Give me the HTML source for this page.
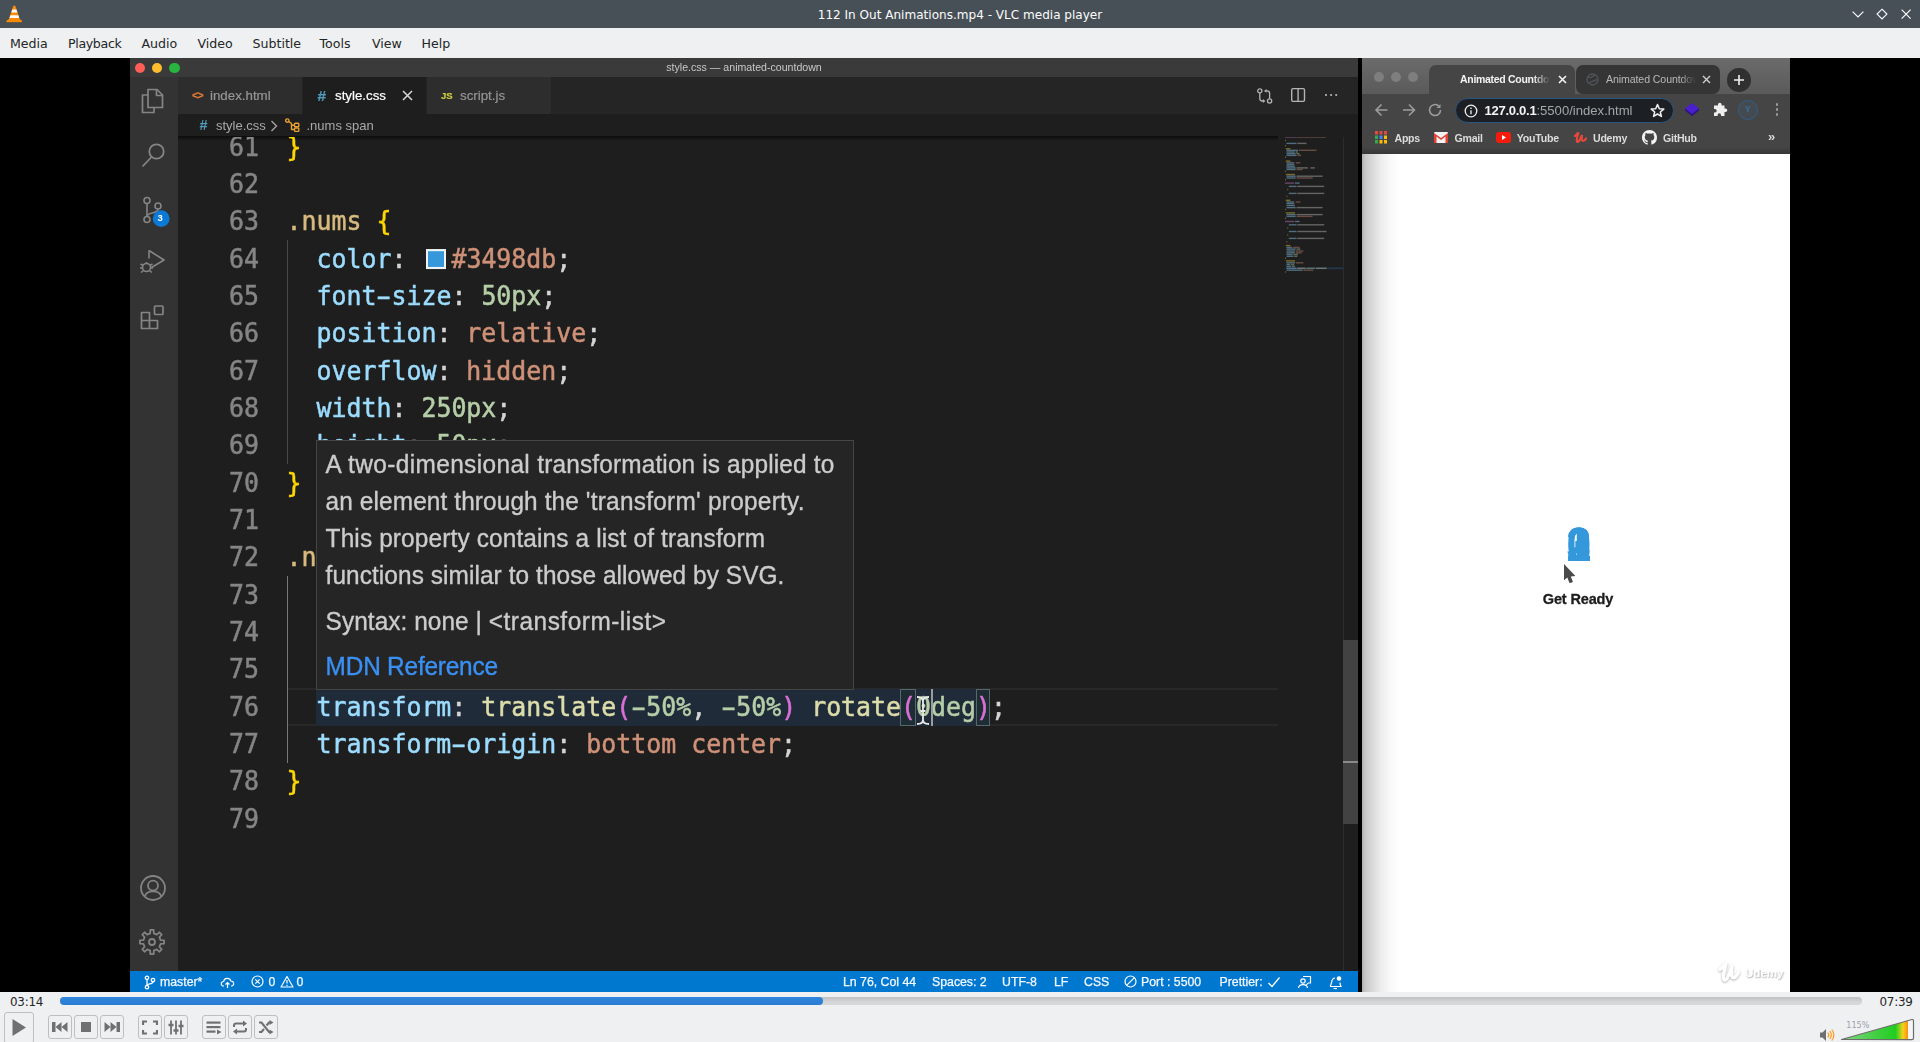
<!DOCTYPE html>
<html lang="en">
<head>
<meta charset="utf-8">
<title>112 In Out Animations.mp4 - VLC media player</title>
<style>
*{box-sizing:border-box;margin:0;padding:0}
html,body{width:1920px;height:1042px;overflow:hidden;background:#eff0f1}
body{font-family:"DejaVu Sans","Liberation Sans",sans-serif;position:relative}
.abs{position:absolute}
#root{position:absolute;left:0;top:0;width:1920px;height:1042px;overflow:hidden;background:#eff0f1}
/* ---------- VLC chrome ---------- */
#titlebar{left:0;top:0;width:1920px;height:28px;background:#475057;color:#fcfcfc}
#title{left:0;top:0;width:1920px;height:28px;line-height:31px;text-align:center;font-size:12.05px;letter-spacing:0px}
#menubar{left:0;top:28px;width:1920px;height:30px;background:#eff0f1;color:#232627;font-size:12.6px}
#menubar span{position:absolute;top:0;line-height:32px;white-space:nowrap}
#video{left:0;top:58px;width:1920px;height:934px;background:#000;overflow:hidden}
#controls{left:0;top:992px;width:1920px;height:50px;background:#eff0f1}
.tm{font-size:11.9px;color:#232627;line-height:16px;white-space:nowrap;letter-spacing:-.25px}
.btn{position:absolute;border:1px solid #bdbfc0;border-radius:3px;background:#eff0f1}
/* ---------- VS Code ---------- */
#vsc{left:130px;top:0;width:1228px;height:934px;background:#1e1e1e;overflow:hidden;filter:blur(.6px);font-family:"Liberation Sans",sans-serif}
#vtitle{left:0;top:0;width:1228px;height:19px;background:#3a3a3a}
#vact{left:0;top:19px;width:48px;height:895px;background:#333333}
#vtabs{left:48px;top:19px;width:1180px;height:36.5px;background:#252526}
.tab{position:absolute;top:0;height:36.5px;-webkit-text-stroke:.2px;background:#2d2d2d;color:#969696;font-size:13.3px;line-height:37px;white-space:nowrap}
#vcrumb{left:48px;top:55.5px;width:1180px;height:22.5px;background:#1e1e1e;color:#a9a9a9;font-size:13px;line-height:23px}
#vstatus{left:0;top:913px;width:1228px;height:21px;background:#0078d0;color:#f4f8ff;font-size:12.3px;line-height:23.4px;-webkit-text-stroke:.25px}
#vstatus span{position:absolute;top:0;white-space:nowrap}
.ln{position:absolute;width:40px;text-align:right;color:#858585;font-family:"DejaVu Sans Mono","Liberation Mono",monospace;font-size:24.9px;line-height:37.33px;height:37.33px;-webkit-text-stroke:.5px;transform:scaleY(1.05);transform-origin:0 27.2px;margin-top:.2px;white-space:pre}
.cl{position:absolute;color:#d4d4d4;font-family:"DejaVu Sans Mono","Liberation Mono",monospace;font-size:24.9px;line-height:37.33px;height:37.33px;-webkit-text-stroke:.5px;transform:scaleY(1.05);transform-origin:0 27.2px;margin-top:.2px;white-space:pre}
.sw{display:inline-block;width:20px;height:18.8px;background:#3498db;border:2.7px solid #f2f2f2;margin:0 5.5px 0 4.5px;vertical-align:-.6px}
.hy{display:inline-block;transform:scaleX(1.75)}
.sel{color:#d7ba7d}.br{color:#ffd700}.pr{color:#9cdcfe}.st{color:#ce9178}.nu{color:#b5cea8}.fn{color:#dcdcaa}.pa{color:#da70d6}
#tip{left:186px;top:382px;width:538px;height:250px;background:#252526;border:1px solid #454545;color:#cccccc;font-family:"Liberation Sans",sans-serif;font-size:24.4px;white-space:nowrap;-webkit-text-stroke:.35px}
#tip div{position:absolute;left:8.6px;line-height:30px;height:30px;transform:scaleY(1.045);transform-origin:0 50%}
/* ---------- Browser ---------- */
.nums span{position:absolute;left:0;top:0;width:60px;height:44px;line-height:44px;text-align:center;font-size:42px;font-weight:bold;color:#3498db;transform:scale(1.06,1.16);transform-origin:50% 48%;-webkit-text-stroke:.1px #3498db}
#brw{left:1362px;top:0;width:428px;height:934px;background:#fff;overflow:hidden;filter:blur(.6px);font-family:"Liberation Sans",sans-serif}
</style>
</head>
<body>
<div id="root">

<!-- VLC title bar -->
<div id="titlebar" class="abs">
  <svg class="abs" style="left:6px;top:5px" width="17" height="18" viewBox="0 0 17 18">
    <path d="M8.3 0.4 Q9.3 0.4 9.6 1.4 L13.6 13.8 L15.8 16 L15.8 17 L0.6 17 L0.6 16 L3 13.8 L7 1.4 Q7.3 0.4 8.3 0.4 Z" fill="#f78b08"/>
    <path d="M6.3 4.6 L10.4 4.6 L11.4 7.6 L5.3 7.6 Z" fill="#fbfbfb"/>
    <path d="M4.4 10.2 L12.3 10.2 L13.2 13 L3.5 13 Z" fill="#fbfbfb"/>
    <path d="M0.6 15.4 L15.800 15.4 L15.800 17.200 L0.6 17.2 Z" fill="#f48a06"/>
  </svg>
  <div id="title" class="abs">112 In Out Animations.mp4 - VLC media player</div>
  <svg class="abs" style="left:1850px;top:7px" width="64" height="14" viewBox="0 0 64 14" fill="none" stroke="#fcfcfc" stroke-width="1.15">
    <path d="M2.600 4.600 L8 10 L13.400 4.600"/>
    <path d="M32 2.200 L36.900 7.100 L32 12 L27.100 7.100 Z"/>
    <path d="M51.600 2.600 L60.600 11.600 M60.600 2.600 L51.600 11.600"/>
  </svg>
</div>

<!-- VLC menu bar -->
<div id="menubar" class="abs">
  <span style="left:10px">Media</span>
  <span style="left:68px;letter-spacing:-.35px">Playback</span>
  <span style="left:141.5px">Audio</span>
  <span style="left:197.5px">Video</span>
  <span style="left:252.5px">Subtitle</span>
  <span style="left:319.5px">Tools</span>
  <span style="left:372px">View</span>
  <span style="left:421.5px">Help</span>
</div>

<!-- Video surface -->
<div id="video" class="abs">
<div id="vsc" class="abs">
  <!-- mac title bar -->
  <div id="vtitle" class="abs">
    <div class="abs" style="left:4.5px;top:4.5px;width:10.5px;height:10.5px;border-radius:50%;background:#fd5f57"></div>
    <div class="abs" style="left:21.5px;top:4.5px;width:10.5px;height:10.5px;border-radius:50%;background:#febc2e"></div>
    <div class="abs" style="left:39px;top:4.5px;width:10.5px;height:10.5px;border-radius:50%;background:#27b43f"></div>
    <div class="abs" style="left:0;top:0;width:1228px;height:19px;line-height:19px;text-align:center;color:#c8c8c8;font-size:10.6px;padding-left:0px">style.css — animated-countdown</div>
  </div>

  <!-- activity bar -->
  <div id="vact" class="abs">
    <!-- files -->
    <svg class="abs" style="left:8px;top:9px" width="30" height="30" viewBox="0 0 30 30" fill="none" stroke="#858585" stroke-width="1.7" stroke-linejoin="round">
      <path d="M10 3.5 H19 L24.5 9 V21.5 H10 Z"/><path d="M18.5 3.5 V9.5 H24.5"/><path d="M10 9 H4.5 V26.5 H16 V21.5"/>
    </svg>
    <!-- search -->
    <svg class="abs" style="left:9px;top:63px" width="30" height="30" viewBox="0 0 30 30" fill="none" stroke="#858585" stroke-width="1.8">
      <circle cx="17.5" cy="11.5" r="7.2"/><path d="M12.5 17 L3.5 26.5"/>
    </svg>
    <!-- scm -->
    <svg class="abs" style="left:9px;top:117.500px" width="32" height="34" viewBox="0 0 32 34" fill="none" stroke="#858585" stroke-width="1.6">
      <circle cx="8" cy="5.5" r="3"/><circle cx="8" cy="24.5" r="3"/><circle cx="19" cy="11" r="3"/><path d="M8 8.5 V21.5"/><path d="M19 14 C19 19 8 17 8 21.5"/>
      <circle cx="22.2" cy="23.6" r="8.4" fill="#0a7ad6" stroke="none"/>
    </svg>
    <div class="abs" style="left:24.2px;top:134.6px;width:12px;height:12px;line-height:12px;text-align:center;color:#fff;font-size:9.5px;font-weight:bold">3</div>
    <!-- debug -->
    <svg class="abs" style="left:8px;top:169px" width="32" height="32" viewBox="0 0 32 32" fill="none" stroke="#858585" stroke-width="1.6" stroke-linejoin="round">
      <path d="M11 4.5 L26 14 L13.5 21.5"/><path d="M11 4.500 V12.500"/>
      <circle cx="8.500" cy="21.500" r="4"/><path d="M2.500 18 L5 19.500 M14.500 18 L12 19.500 M2 22 H4.500 M12.500 22 H15 M3 26.500 L5.500 24.500 M14 26.500 L11.500 24.500 M8.500 17.500 V16"/>
    </svg>
    <!-- extensions -->
    <svg class="abs" style="left:9px;top:226px" width="30" height="30" viewBox="0 0 30 30" fill="none" stroke="#858585" stroke-width="1.7" stroke-linejoin="round">
      <path d="M2.500 9.500 H10.500 V17.500 H2.500 Z M2.500 17.500 H10.500 V25.500 H2.500 Z M10.500 17.500 H18.500 V25.500 H10.500 Z"/><rect x="15.500" y="3" width="8.500" height="8.500" rx="1"/>
    </svg>
    <!-- account -->
    <svg class="abs" style="left:7.500px;top:795.600px" width="30" height="30" viewBox="0 0 30 30" fill="none" stroke="#838383" stroke-width="1.800">
      <circle cx="15" cy="15" r="12"/><circle cx="15" cy="12.600" r="5"/><path d="M6.800 23.400 C8.500 16.800 21.500 16.800 23.200 23.400"/>
    </svg>
    <!-- gear -->
    <svg class="abs" style="left:7.200px;top:849.500px" width="30" height="30" viewBox="0 0 30 30" fill="none" stroke="#838383" stroke-width="1.800" stroke-linejoin="round">
      <path d="M13.15 6.40 L13.38 2.91 L16.62 2.91 L16.85 6.40 L19.77 7.61 L22.40 5.30 L24.70 7.60 L22.39 10.23 L23.60 13.15 L27.09 13.38 L27.09 16.62 L23.60 16.85 L22.39 19.77 L24.70 22.40 L22.40 24.70 L19.77 22.39 L16.85 23.60 L16.62 27.09 L13.38 27.09 L13.15 23.60 L10.23 22.39 L7.60 24.70 L5.30 22.40 L7.61 19.77 L6.40 16.85 L2.91 16.62 L2.91 13.38 L6.40 13.15 L7.61 10.23 L5.30 7.60 L7.60 5.30 L10.23 7.61 Z"/><circle cx="15" cy="15" r="3"/>
    </svg>
  </div>

  <!-- tabs -->
  <div id="vtabs" class="abs">
    <div class="tab" style="left:0;width:124px"><span style="position:absolute;left:14px;color:#e37933;font-size:10.5px;font-weight:bold;letter-spacing:-.6px">&lt;&gt;</span><span style="position:absolute;left:32px">index.html</span></div>
    <div class="tab" style="left:125px;width:123px;background:#1e1e1e;color:#ffffff"><span style="position:absolute;left:14.5px;color:#519aba;font-size:15.5px;font-weight:bold">#</span><span style="position:absolute;left:32px">style.css</span>
      <svg style="position:absolute;left:99px;top:13px" width="11" height="11" viewBox="0 0 11 11" stroke="#d8d8d8" stroke-width="1.500"><path d="M1 1 L10 10 M10 1 L1 10"/></svg></div>
    <div class="tab" style="left:249px;width:124px"><span style="position:absolute;left:14px;color:#cbcb41;font-size:9.500px;font-weight:bold">JS</span><span style="position:absolute;left:33px">script.js</span></div>
    <!-- editor actions -->
    <svg class="abs" style="left:1077px;top:9px" width="20" height="20" viewBox="0 0 20 20" fill="none" stroke="#b4b4b4" stroke-width="1.300">
      <circle cx="4.800" cy="4.900" r="2.100"/><circle cx="14.600" cy="15" r="2.100"/>
      <path d="M4.800 7.100 V12.500 Q4.800 15 7.300 15 H8.500"/><path d="M7.900 13.100 L10.400 15 L7.900 16.900 Z" fill="#b4b4b4" stroke="none"/>
      <path d="M14.600 12.800 V7.400 Q14.600 4.900 12.100 4.900 H10.900"/><path d="M11.500 3 L9 4.900 L11.500 6.800 Z" fill="#b4b4b4" stroke="none"/>
    </svg>
    <svg class="abs" style="left:1111px;top:9px" width="18" height="18" viewBox="0 0 18 18" fill="none" stroke="#b4b4b4" stroke-width="1.400"><rect x="2.700" y="2.600" width="12.800" height="12.800" rx="1.300"/><path d="M9.100 2.600 V15.400"/></svg>
    <div class="abs" style="left:1146.700px;top:17.200px;width:2.300px;height:2.300px;background:#b0b0b0;border-radius:30%;box-shadow:5.100px 0 0 #b0b0b0,10.200px 0 0 #b0b0b0"></div>
  </div>

  <!-- breadcrumbs -->
  <div id="vcrumb" class="abs">
    <span class="abs" style="left:21.5px;color:#519aba;font-weight:bold;font-size:14.5px">#</span>
    <span class="abs" style="left:38px">style.css</span>
    <svg class="abs" style="left:92px;top:6px" width="8" height="12" viewBox="0 0 8 12" fill="none" stroke="#a9a9a9" stroke-width="1.300"><path d="M1.500 1 L6.500 6 L1.500 11"/></svg>
    <svg class="abs" style="left:105.500px;top:3px" width="18" height="18" viewBox="0 0 18 18" fill="none" stroke="#e8a030" stroke-width="1.400" stroke-linejoin="round"><circle cx="3.300" cy="3.600" r="1.700"/><path d="M4.800 4.600 L7.500 6.500 V12.500 H10.500 M7.500 8.200 H10.500"/><rect x="10.500" y="6.300" width="4.300" height="3.400" rx=".8"/><rect x="10.500" y="11" width="4.300" height="3.400" rx=".8"/></svg>
    <span class="abs" style="left:128.5px">.nums span</span>
  </div>
  <!-- scroll shadow below breadcrumbs -->
  <div class="abs" style="left:48px;top:78px;width:1100px;height:5px;background:linear-gradient(#0c0c0c,rgba(16,16,16,0))"></div>

<!--ED_START-->
  <!-- editor -->
  <div id="ed" class="abs" style="left:48px;top:79px;width:1180px;height:835px;overflow:hidden">
    <div class="abs" style="left:109px;top:551.40px;width:991px;height:37.33px;border-top:2px solid #282828;border-bottom:2px solid #282828"></div>
    <div class="abs" style="left:138px;top:552.40px;width:674px;height:36.33px;background:#1f2b38"></div>
    <div class="abs" style="left:722.3px;top:551.90px;width:15.7px;height:37.33px;border:1px solid #56676f;background:#1e2d33"></div>
    <div class="abs" style="left:798.3px;top:551.90px;width:14px;height:37.33px;border:1px solid #56676f;background:#1e2d33"></div>
    <div class="abs" style="left:109px;top:103.44px;width:1.2px;height:223.98px;background:#484848"></div>
    <div class="abs" style="left:109px;top:439.41px;width:1.4px;height:186.65px;background:#787878"></div>
    <div class="ln" style="left:41px;top:-8.55px">61</div>
    <div class="cl" style="left:108.5px;top:-8.55px"><span class="br">}</span></div>
    <div class="ln" style="left:41px;top:28.78px">62</div>
    <div class="ln" style="left:41px;top:66.11px">63</div>
    <div class="cl" style="left:108.5px;top:66.11px"><span class="sel">.nums</span> <span class="br">{</span></div>
    <div class="ln" style="left:41px;top:103.44px">64</div>
    <div class="cl" style="left:108.5px;top:103.44px">  <span class="pr">color</span>: <span class="sw"></span><span class="st">#3498db</span>;</div>
    <div class="ln" style="left:41px;top:140.77px">65</div>
    <div class="cl" style="left:108.5px;top:140.77px">  <span class="pr">font<span class="hy">-</span>size</span>: <span class="nu">50px</span>;</div>
    <div class="ln" style="left:41px;top:178.10px">66</div>
    <div class="cl" style="left:108.5px;top:178.10px">  <span class="pr">position</span>: <span class="st">relative</span>;</div>
    <div class="ln" style="left:41px;top:215.43px">67</div>
    <div class="cl" style="left:108.5px;top:215.43px">  <span class="pr">overflow</span>: <span class="st">hidden</span>;</div>
    <div class="ln" style="left:41px;top:252.76px">68</div>
    <div class="cl" style="left:108.5px;top:252.76px">  <span class="pr">width</span>: <span class="nu">250px</span>;</div>
    <div class="ln" style="left:41px;top:290.09px">69</div>
    <div class="cl" style="left:108.5px;top:290.09px">  <span class="pr">height</span>: <span class="nu">50px</span>;</div>
    <div class="ln" style="left:41px;top:327.42px">70</div>
    <div class="cl" style="left:108.5px;top:327.42px"><span class="br">}</span></div>
    <div class="ln" style="left:41px;top:364.75px">71</div>
    <div class="ln" style="left:41px;top:402.08px">72</div>
    <div class="cl" style="left:108.5px;top:402.08px"><span class="sel">.nums span</span> <span class="br">{</span></div>
    <div class="ln" style="left:41px;top:439.41px">73</div>
    <div class="cl" style="left:108.5px;top:439.41px">  <span class="pr">position</span>: <span class="st">absolute</span>;</div>
    <div class="ln" style="left:41px;top:476.74px">74</div>
    <div class="cl" style="left:108.5px;top:476.74px">  <span class="pr">top</span>: <span class="nu">50%</span>;</div>
    <div class="ln" style="left:41px;top:514.07px">75</div>
    <div class="cl" style="left:108.5px;top:514.07px">  <span class="pr">left</span>: <span class="nu">50%</span>;</div>
    <div class="ln" style="left:41px;top:551.40px">76</div>
    <div class="cl" style="left:108.5px;top:551.40px">  <span class="pr">transform</span>: <span class="fn">translate</span><span class="pa">(</span><span class="nu"><span class="hy">-</span>50%</span>, <span class="nu"><span class="hy">-</span>50%</span><span class="pa">)</span> <span class="fn">rotate</span><span class="pa">(</span><span class="nu">0deg</span><span class="pa">)</span>;</div>
    <div class="ln" style="left:41px;top:588.73px">77</div>
    <div class="cl" style="left:108.5px;top:588.73px">  <span class="pr">transform<span class="hy">-</span>origin</span>: <span class="st">bottom center</span>;</div>
    <div class="ln" style="left:41px;top:626.06px">78</div>
    <div class="cl" style="left:108.5px;top:626.06px"><span class="br">}</span></div>
    <div class="ln" style="left:41px;top:663.39px">79</div>
    <div class="abs" style="left:752.5px;top:552.40px;width:2px;height:36.33px;background:#9a9c9e"></div>
    <svg class="abs" style="left:738px;top:559.40px" width="14" height="29" viewBox="0 0 14 29" fill="none" stroke="#e8e8e8" stroke-width="1.8"><path d="M1 1 C4.500 1 7 2 7 5 V24 C7 27 4.500 28 1 28 M13 1 C9.500 1 7 2 7 5 M7 24 C7 27 9.500 28 13 28 M4.500 15 H9.500"/></svg>
    <!-- hover tooltip -->
    <div id="tip" class="abs" style="left:138px;top:303px">
      <div style="top:8.8px"><span style="letter-spacing:.39px">A two-dimensional </span><span style="letter-spacing:.15px">transformation is applied to</span></div>
      <div style="top:45.8px"><span style="letter-spacing:.11px">an element through the </span><span style="letter-spacing:.26px">'transform' property.</span></div>
      <div style="top:82.8px;letter-spacing:.14px">This property contains a list of transform</div>
      <div style="top:119.8px;letter-spacing:.08px">functions similar to those allowed by SVG.</div>
      <div style="top:166.3px"><span style="letter-spacing:.06px">Syntax: none | </span><span style="letter-spacing:.52px">&lt;transform-list&gt;</span></div>
      <div style="top:210.7px;color:#3a90f2;letter-spacing:-.2px">MDN Reference</div>
    </div>
    <svg class="abs" style="left:1102px;top:-7px;filter:blur(.5px)" width="66" height="150" viewBox="0 0 66 150">
      <rect x="5.8" y="137.4" width="57.6" height="1.8" fill="#24384d"/>
      <rect x="5.0" y="6.3" width="11.5" height="1.4" fill="#9a5f9a" opacity=".62"/>
      <rect x="16.5" y="6.3" width="29.2" height="1.4" fill="#94695a" opacity=".62"/>
      <rect x="5.1" y="9.7" width="0.9" height="1.4" fill="#b09a2e" opacity=".62"/>
      <rect x="6.5" y="12.7" width="10.0" height="1.4" fill="#6f9cb8" opacity=".62"/>
      <rect x="17.3" y="12.7" width="9.2" height="1.4" fill="#8f8f8f" opacity=".62"/>
      <rect x="5.0" y="15.0" width="0.9" height="1.4" fill="#b09a2e" opacity=".62"/>
      <rect x="5.8" y="18.1" width="4.6" height="1.4" fill="#b09a2e" opacity=".62"/>
      <rect x="6.5" y="19.6" width="11.5" height="1.4" fill="#6f9cb8" opacity=".62"/>
      <rect x="18.8" y="19.6" width="17.7" height="1.4" fill="#94695a" opacity=".62"/>
      <rect x="6.5" y="21.3" width="8.4" height="1.4" fill="#6f9cb8" opacity=".62"/>
      <rect x="15.7" y="21.3" width="2.3" height="1.4" fill="#86977c" opacity=".62"/>
      <rect x="6.5" y="23.0" width="9.2" height="1.4" fill="#6f9cb8" opacity=".62"/>
      <rect x="16.5" y="23.0" width="3.1" height="1.4" fill="#86977c" opacity=".62"/>
      <rect x="6.5" y="24.7" width="10.0" height="1.4" fill="#6f9cb8" opacity=".62"/>
      <rect x="17.3" y="24.7" width="3.8" height="1.4" fill="#94695a" opacity=".62"/>
      <rect x="5.0" y="26.4" width="0.9" height="1.4" fill="#b09a2e" opacity=".62"/>
      <rect x="5.8" y="30.4" width="4.6" height="1.4" fill="#b09a2e" opacity=".62"/>
      <rect x="6.5" y="32.1" width="7.7" height="1.4" fill="#6f9cb8" opacity=".62"/>
      <rect x="15.7" y="32.1" width="4.6" height="1.4" fill="#94695a" opacity=".62"/>
      <rect x="6.5" y="33.8" width="7.7" height="1.4" fill="#6f9cb8" opacity=".62"/>
      <rect x="6.5" y="35.5" width="8.4" height="1.4" fill="#6f9cb8" opacity=".62"/>
      <rect x="6.5" y="37.2" width="9.2" height="1.4" fill="#6f9cb8" opacity=".62"/>
      <rect x="16.5" y="37.2" width="11.5" height="1.4" fill="#8f8f8f" opacity=".62"/>
      <rect x="30.3" y="37.2" width="4.6" height="1.4" fill="#8f8f8f" opacity=".62"/>
      <rect x="6.5" y="38.8" width="9.2" height="1.4" fill="#6f9cb8" opacity=".62"/>
      <rect x="16.5" y="38.8" width="6.1" height="1.4" fill="#94695a" opacity=".62"/>
      <rect x="5.0" y="40.7" width="0.9" height="1.4" fill="#b09a2e" opacity=".62"/>
      <rect x="5.8" y="43.8" width="9.2" height="1.4" fill="#b09a2e" opacity=".62"/>
      <rect x="6.5" y="45.5" width="9.2" height="1.4" fill="#6f9cb8" opacity=".62"/>
      <rect x="16.5" y="45.5" width="26.1" height="1.4" fill="#8f8f8f" opacity=".62"/>
      <rect x="6.5" y="47.3" width="9.2" height="1.4" fill="#6f9cb8" opacity=".62"/>
      <rect x="16.5" y="47.3" width="16.1" height="1.4" fill="#94695a" opacity=".62"/>
      <rect x="5.0" y="49.1" width="0.9" height="1.4" fill="#b09a2e" opacity=".62"/>
      <rect x="5.0" y="52.4" width="9.2" height="1.4" fill="#9a5f9a" opacity=".62"/>
      <rect x="15.0" y="52.4" width="4.6" height="1.4" fill="#6f9cb8" opacity=".62"/>
      <rect x="8.8" y="55.7" width="7.7" height="1.4" fill="#6f9cb8" opacity=".62"/>
      <rect x="17.3" y="55.7" width="26.9" height="1.4" fill="#8f8f8f" opacity=".62"/>
      <rect x="7.3" y="58.8" width="0.9" height="1.4" fill="#b09a2e" opacity=".62"/>
      <rect x="8.8" y="62.7" width="7.7" height="1.4" fill="#6f9cb8" opacity=".62"/>
      <rect x="17.3" y="62.7" width="26.9" height="1.4" fill="#8f8f8f" opacity=".62"/>
      <rect x="6.5" y="65.7" width="0.9" height="1.4" fill="#b09a2e" opacity=".62"/>
      <rect x="5.8" y="69.6" width="4.6" height="1.4" fill="#b09a2e" opacity=".62"/>
      <rect x="6.5" y="71.3" width="7.7" height="1.4" fill="#6f9cb8" opacity=".62"/>
      <rect x="15.7" y="71.3" width="4.6" height="1.4" fill="#94695a" opacity=".62"/>
      <rect x="6.5" y="72.9" width="7.7" height="1.4" fill="#6f9cb8" opacity=".62"/>
      <rect x="6.5" y="74.8" width="8.4" height="1.4" fill="#6f9cb8" opacity=".62"/>
      <rect x="6.5" y="76.9" width="9.2" height="1.4" fill="#6f9cb8" opacity=".62"/>
      <rect x="16.5" y="76.9" width="26.1" height="1.4" fill="#8f8f8f" opacity=".62"/>
      <rect x="5.0" y="78.8" width="0.9" height="1.4" fill="#b09a2e" opacity=".62"/>
      <rect x="5.8" y="82.2" width="9.2" height="1.4" fill="#b09a2e" opacity=".62"/>
      <rect x="6.5" y="83.9" width="9.2" height="1.4" fill="#6f9cb8" opacity=".62"/>
      <rect x="16.5" y="83.9" width="26.1" height="1.4" fill="#8f8f8f" opacity=".62"/>
      <rect x="6.5" y="85.7" width="9.2" height="1.4" fill="#6f9cb8" opacity=".62"/>
      <rect x="16.5" y="85.7" width="16.1" height="1.4" fill="#94695a" opacity=".62"/>
      <rect x="5.0" y="87.5" width="0.9" height="1.4" fill="#b09a2e" opacity=".62"/>
      <rect x="5.0" y="90.8" width="9.2" height="1.4" fill="#9a5f9a" opacity=".62"/>
      <rect x="15.0" y="90.8" width="4.6" height="1.4" fill="#6f9cb8" opacity=".62"/>
      <rect x="8.8" y="94.1" width="7.7" height="1.4" fill="#6f9cb8" opacity=".62"/>
      <rect x="17.3" y="94.1" width="26.9" height="1.4" fill="#8f8f8f" opacity=".62"/>
      <rect x="7.3" y="97.2" width="0.9" height="1.4" fill="#b09a2e" opacity=".62"/>
      <rect x="8.8" y="100.8" width="7.7" height="1.4" fill="#6f9cb8" opacity=".62"/>
      <rect x="17.3" y="100.8" width="29.2" height="1.4" fill="#8f8f8f" opacity=".62"/>
      <rect x="7.3" y="104.1" width="0.9" height="1.4" fill="#b09a2e" opacity=".62"/>
      <rect x="8.8" y="107.7" width="7.7" height="1.4" fill="#6f9cb8" opacity=".62"/>
      <rect x="17.3" y="107.7" width="26.9" height="1.4" fill="#8f8f8f" opacity=".62"/>
      <rect x="6.5" y="111.0" width="0.9" height="1.4" fill="#b09a2e" opacity=".62"/>
      <rect x="5.8" y="114.9" width="4.6" height="1.4" fill="#b09a2e" opacity=".62"/>
      <rect x="6.5" y="116.7" width="5.4" height="1.4" fill="#6f9cb8" opacity=".62"/>
      <rect x="12.7" y="116.7" width="6.9" height="1.4" fill="#94695a" opacity=".62"/>
      <rect x="6.5" y="118.4" width="9.2" height="1.4" fill="#6f9cb8" opacity=".62"/>
      <rect x="16.5" y="118.4" width="3.8" height="1.4" fill="#86977c" opacity=".62"/>
      <rect x="6.5" y="120.3" width="8.4" height="1.4" fill="#6f9cb8" opacity=".62"/>
      <rect x="15.7" y="120.3" width="7.7" height="1.4" fill="#94695a" opacity=".62"/>
      <rect x="6.5" y="122.1" width="8.4" height="1.4" fill="#6f9cb8" opacity=".62"/>
      <rect x="15.7" y="122.1" width="6.1" height="1.4" fill="#94695a" opacity=".62"/>
      <rect x="6.5" y="123.8" width="6.1" height="1.4" fill="#6f9cb8" opacity=".62"/>
      <rect x="13.4" y="123.8" width="4.6" height="1.4" fill="#86977c" opacity=".62"/>
      <rect x="6.5" y="125.6" width="6.9" height="1.4" fill="#6f9cb8" opacity=".62"/>
      <rect x="14.2" y="125.6" width="3.1" height="1.4" fill="#86977c" opacity=".62"/>
      <rect x="5.0" y="127.5" width="0.9" height="1.4" fill="#b09a2e" opacity=".62"/>
      <rect x="5.8" y="130.2" width="9.2" height="1.4" fill="#b09a2e" opacity=".62"/>
      <rect x="6.5" y="132.1" width="8.4" height="1.4" fill="#6f9cb8" opacity=".62"/>
      <rect x="15.7" y="132.1" width="7.7" height="1.4" fill="#94695a" opacity=".62"/>
      <rect x="6.5" y="133.8" width="3.8" height="1.4" fill="#6f9cb8" opacity=".62"/>
      <rect x="11.1" y="133.8" width="3.1" height="1.4" fill="#86977c" opacity=".62"/>
      <rect x="6.5" y="135.6" width="4.6" height="1.4" fill="#6f9cb8" opacity=".62"/>
      <rect x="11.9" y="135.6" width="3.1" height="1.4" fill="#86977c" opacity=".62"/>
      <rect x="6.5" y="137.6" width="10.0" height="1.4" fill="#6f9cb8" opacity=".62"/>
      <rect x="17.3" y="137.6" width="8.4" height="1.4" fill="#a39f82" opacity=".62"/>
      <rect x="26.5" y="137.6" width="8.4" height="1.4" fill="#86977c" opacity=".62"/>
      <rect x="35.7" y="137.6" width="10.8" height="1.4" fill="#a39f82" opacity=".62"/>
      <rect x="6.5" y="139.5" width="16.1" height="1.4" fill="#6f9cb8" opacity=".62"/>
      <rect x="23.4" y="139.5" width="10.0" height="1.4" fill="#94695a" opacity=".62"/>
      <rect x="5.0" y="141.3" width="0.9" height="1.4" fill="#b09a2e" opacity=".62"/>
    </svg>
    <div class="abs" style="left:1165px;top:0px;width:1px;height:835px;background:#2c2c2c"></div>
    <div class="abs" style="left:1165px;top:503.3px;width:14.5px;height:183.4px;background:#424242"></div>
    <div class="abs" style="left:1165px;top:623.5px;width:14.5px;height:2.5px;background:#8a8a8a"></div>
  </div>
<!--ED_END-->

  <!-- status bar -->
  <div id="vstatus" class="abs">
    <svg class="abs" style="left:14px;top:3.8px" width="12" height="15" viewBox="0 0 12 15" fill="none" stroke="#fff" stroke-width="1.300"><circle cx="3" cy="2.800" r="1.700"/><circle cx="3" cy="12.200" r="1.700"/><circle cx="9" cy="5" r="1.700"/><path d="M3 4.500 V10.500 M9 6.700 C9 9.500 3 8.500 3 10.500"/></svg>
    <span style="left:30px">master*</span>
    <svg class="abs" style="left:90px;top:4.8px" width="15" height="13" viewBox="0 0 15 13" fill="none" stroke="#fff" stroke-width="1.200"><path d="M4 10 H3.500 C0.500 10 0.500 5.500 3.700 5.500 C4 1.800 9.800 1.200 10.800 5 C14.500 5 14.500 10 11.500 10 H11"/><path d="M7.500 12 V6.500 M5.500 8.500 L7.500 6.500 L9.500 8.500"/></svg>
    <svg class="abs" style="left:121px;top:4.3px" width="13" height="13" viewBox="0 0 13 13" fill="none" stroke="#fff" stroke-width="1.200"><circle cx="6.500" cy="6.500" r="5.500"/><path d="M4.300 4.300 L8.700 8.700 M8.700 4.300 L4.300 8.700"/></svg>
    <span style="left:138.500px">0</span>
    <svg class="abs" style="left:149.500px;top:4.3px" width="14" height="13" viewBox="0 0 14 13" fill="none" stroke="#fff" stroke-width="1.200" stroke-linejoin="round"><path d="M7 1.500 L13 12 H1 Z"/><path d="M7 5 V8.500 M7 9.800 V11"/></svg>
    <span style="left:166.500px">0</span>
    <span style="left:713px">Ln 76, Col 44</span>
    <span style="left:802px">Spaces: 2</span>
    <span style="left:872px">UTF-8</span>
    <span style="left:924px">LF</span>
    <span style="left:954px">CSS</span>
    <svg class="abs" style="left:994px;top:4.3px" width="13" height="13" viewBox="0 0 13 13" fill="none" stroke="#fff" stroke-width="1.200"><circle cx="6.500" cy="6.500" r="5.500"/><path d="M2.800 10.200 L10.200 2.800"/></svg>
    <span style="left:1011px">Port : 5500</span>
    <span style="left:1089.500px">Prettier:</span>
    <svg class="abs" style="left:1137px;top:4.8px" width="14" height="12" viewBox="0 0 14 12" fill="none" stroke="#fff" stroke-width="1.300"><path d="M1.500 7 L5 10.500 L12.500 1.500"/></svg>
    <svg class="abs" style="left:1167px;top:3.8px" width="15" height="14" viewBox="0 0 15 14" fill="none" stroke="#fff" stroke-width="1.200"><path d="M6 1.500 H13.500 V8 H11"/><circle cx="6" cy="6" r="2.200"/><path d="M1.500 13 C2 8.500 10 8.500 10.500 13 M11 8 L9 10.500"/></svg>
    <svg class="abs" style="left:1198px;top:3.8px" width="15" height="15" viewBox="0 0 15 15" fill="none" stroke="#fff" stroke-width="1.200"><path d="M2 11.500 C4.500 9 2.500 3 7 3 M12 7.500 C12 10 12.500 10.500 13 11.500 H2"/><path d="M5.500 13.500 H9"/><circle cx="11" cy="3.500" r="2.300" fill="#fff" stroke="none"/></svg>
  </div>
</div>

<div id="brw" class="abs">
  <!-- tab strip -->
  <div class="abs" style="left:0;top:0;width:428px;height:36px;background:linear-gradient(#6b6b6b,#5a5a5a)"></div>
  <div class="abs" style="left:12px;top:13.500px;width:10px;height:10px;border-radius:50%;background:#7e7e7e"></div>
  <div class="abs" style="left:29px;top:13.500px;width:10px;height:10px;border-radius:50%;background:#7e7e7e"></div>
  <div class="abs" style="left:46px;top:13.500px;width:10px;height:10px;border-radius:50%;background:#7e7e7e"></div>
  <!-- active tab -->
  <div class="abs" style="left:67px;top:7px;width:146px;height:30px;background:#454545;border-radius:7px 7px 0 0"></div>
  <div class="abs" style="left:98px;top:12px;width:100px;height:18px;line-height:18px;font-size:10.5px;color:#f2f2f2;white-space:nowrap;overflow:hidden;font-weight:bold;letter-spacing:-0.3px;-webkit-mask-image:linear-gradient(90deg,#000 73px,transparent 90px);width:90px">Animated Countdown</div>
  <svg class="abs" style="left:196px;top:17px" width="9" height="9" viewBox="0 0 9 9" stroke="#f0f0f0" stroke-width="1.700"><path d="M1 1 L8 8 M8 1 L1 8"/></svg>
  <!-- inactive tab -->
  <div class="abs" style="left:213.500px;top:7px;width:144.500px;height:29px;background:#353535;border-radius:7px 7px 7px 7px"></div>
  <svg class="abs" style="left:224px;top:15px" width="13" height="13" viewBox="0 0 13 13" fill="none" stroke="#50545a" stroke-width="1.300"><circle cx="6.500" cy="6.500" r="5.500"/><path d="M2 4 C5 6 6 3 9 2.500 M3 10.500 C5 8 8 9 11 6"/></svg>
  <div class="abs" style="left:244px;top:12px;height:18px;line-height:18px;font-size:10.6px;color:#b8b8b8;white-space:nowrap;overflow:hidden;letter-spacing:-0.1px;-webkit-mask-image:linear-gradient(90deg,#000 74px,transparent 90px);width:90px">Animated Countdown</div>
  <svg class="abs" style="left:340px;top:17px" width="9" height="9" viewBox="0 0 9 9" stroke="#d0d0d0" stroke-width="1.400"><path d="M1 1 L8 8 M8 1 L1 8"/></svg>
  <!-- new tab -->
  <div class="abs" style="left:365px;top:10px;width:23.500px;height:23.500px;border-radius:50%;background:#303030"></div>
  <svg class="abs" style="left:371px;top:16px" width="12" height="12" viewBox="0 0 12 12" stroke="#f0f0f0" stroke-width="1.600"><path d="M6 1 V11 M1 6 H11"/></svg>

  <!-- toolbar -->
  <div class="abs" style="left:0;top:36px;width:428px;height:60px;background:#454545"></div>
  <svg class="abs" style="left:12px;top:44px" width="70" height="16" viewBox="0 0 70 16" fill="none" stroke="#9c9c9c" stroke-width="1.600">
    <path d="M13.500 8 H2.500 M7.500 2.500 L2 8 L7.500 13.500"/>
    <path d="M29 8 H40 M35 2.500 L40.500 8 L35 13.500"/>
    <path d="M66.500 8 A5.500 5.500 0 1 1 64.500 3.800"/><path d="M66.500 2 V6 H62.500 Z" fill="#9c9c9c" stroke="none"/>
  </svg>
  <!-- omnibox -->
  <div class="abs" style="left:93px;top:39.500px;width:218.500px;height:25.500px;border-radius:13px;background:#1c2024;border:1.500px solid #2d557d"></div>
  <svg class="abs" style="left:102px;top:45.500px" width="14" height="14" viewBox="0 0 14 14" fill="none" stroke="#f0f0f0" stroke-width="1.300"><circle cx="7" cy="7" r="5.800"/><path d="M7 6.200 V10.200 M7 3.600 V5"/></svg>
  <div class="abs" style="left:122.5px;top:44px;height:18px;line-height:18px;font-size:13.1px;white-space:nowrap;color:#a4a6a8;letter-spacing:0px"><span style="color:#f4f4f4;font-weight:bold;letter-spacing:-0.300px">127.0.0.1</span>:5500/index.html</div>
  <svg class="abs" style="left:288px;top:44.500px" width="15" height="15" viewBox="0 0 15 15" fill="none" stroke="#f0f0f0" stroke-width="1.500" stroke-linejoin="round"><path d="M7.500 1.500 L9.300 5.800 L13.800 6.100 L10.300 9 L11.400 13.400 L7.500 11 L3.600 13.400 L4.700 9 L1.200 6.100 L5.700 5.800 Z"/></svg>
  <!-- extension icons -->
  <svg class="abs" style="left:322px;top:44px" width="16" height="15" viewBox="0 0 16 15"><path d="M8 1 L15 6.500 L8 12 L1 6.500 Z" fill="#4a1fd0"/><path d="M1 6.500 L8 12 L15 6.500 V8.500 L8 14 L1 8.500 Z" fill="#2d0f8c"/></svg>
  <svg class="abs" style="left:350px;top:44px" width="16" height="16" viewBox="0 0 16 16" fill="#efefef"><path d="M6 2.500 A1.800 1.800 0 0 1 9.600 2.500 V3.500 H12.500 V6.500 H13.500 A1.800 1.800 0 0 1 13.500 10.100 H12.500 V14 H9 V13 A1.700 1.700 0 0 0 5.600 13 V14 H2 V10.500 H3 A1.700 1.700 0 0 0 3 7.100 H2 V3.500 H6 Z"/></svg>
  <div class="abs" style="left:376px;top:42px;width:19.500px;height:19.500px;border-radius:50%;border:1.300px solid #2f5f8a;background:#454a50"></div>
  <div class="abs" style="left:376px;top:42px;width:19.500px;height:19.500px;line-height:19.500px;text-align:center;font-size:9px;color:#3a6d9c;font-weight:bold">Y</div>
  <div class="abs" style="left:413.500px;top:45px;width:2.500px;height:2.500px;border-radius:50%;background:#9c9c9c;box-shadow:0 5px 0 #9c9c9c,0 10px 0 #9c9c9c"></div>

  <!-- bookmarks -->
  <div class="abs bm" style="left:0;top:65.5px;width:428px;height:28px;font-size:10.6px;color:#dcdcdc;font-weight:bold;letter-spacing:-0.25px">
    <svg class="abs" style="left:12.500px;top:7px" width="13" height="13" viewBox="0 0 13 13"><g><rect x="0" y="0" width="3" height="3.500" fill="#e04a3f"/><rect x="4.500" y="0" width="3" height="3.500" fill="#e04a3f"/><rect x="9" y="0" width="3" height="3.500" fill="#e04a3f"/><rect x="0" y="4.500" width="3" height="3.500" fill="#34a853"/><rect x="4.500" y="4.500" width="3" height="3.500" fill="#4285f4"/><rect x="9" y="4.500" width="3" height="3.500" fill="#fbbc05"/><rect x="0" y="9" width="3" height="3.500" fill="#34a853"/><rect x="4.500" y="9" width="3" height="3.500" fill="#fbbc05"/><rect x="9" y="9" width="3" height="3.500" fill="#fbbc05"/></g></svg>
    <span class="abs" style="left:32.5px;top:5px;line-height:18px">Apps</span>
    <svg class="abs" style="left:72px;top:8.500px" width="14" height="11" viewBox="0 0 14 11"><rect width="14" height="11" rx="1" fill="#f2f2f2"/><path d="M0 1 V11 H2.500 V4.500 L7 8 L11.500 4.500 V11 H14 V1 L7 6 Z" fill="#e34133"/></svg>
    <span class="abs" style="left:92.5px;top:5px;line-height:18px">Gmail</span>
    <svg class="abs" style="left:134px;top:8.500px" width="15" height="11" viewBox="0 0 15 11"><rect width="15" height="11" rx="3" fill="#f61c0d"/><path d="M6 3 L10 5.500 L6 8 Z" fill="#fff"/></svg>
    <span class="abs" style="left:154.8px;top:5px;line-height:18px">YouTube</span>
    <svg class="abs" style="left:209.500px;top:6px" width="16" height="15" viewBox="0 0 16 15" fill="none" stroke="#e8493c" stroke-width="2.200" stroke-linecap="round"><path d="M3 6 L6.500 2.500 C5 7 4 11 5.500 12 C7.500 12 9 7 10 5 C9.500 8 9.500 11 11 11 C12.500 11 13.500 9.500 14 8.500"/></svg>
    <span class="abs" style="left:231px;top:5px;line-height:18px">Udemy</span>
    <svg class="abs" style="left:279.5px;top:6.500px" width="15" height="15" viewBox="0 0 16 16" fill="#f4f4f4"><path d="M8 0C3.580 0 0 3.580 0 8c0 3.540 2.290 6.530 5.470 7.590.4.070.55-.17.550-.38 0-.19-.01-.82-.01-1.490-2.010.37-2.530-.49-2.690-.94-.09-.23-.48-.94-.82-1.130-.28-.15-.68-.52-.01-.53.63-.01 1.080.58 1.230.82.720 1.210 1.870.87 2.330.66.070-.52.280-.87.510-1.070-1.780-.2-3.640-.89-3.640-3.950 0-.87.310-1.590.82-2.150-.08-.2-.36-1.020.08-2.120 0 0 .67-.21 2.200.82.640-.18 1.320-.27 2-.27s1.360.09 2 .27c1.530-1.040 2.200-.82 2.200-.82.440 1.100.16 1.920.08 2.120.51.560.82 1.270.82 2.150 0 3.070-1.870 3.750-3.650 3.950.29.250.54.730.54 1.480 0 1.070-.01 1.930-.01 2.200 0 .21.150.46.550.38A8.013 8.013 0 0016 8c0-4.420-3.580-8-8-8z"/></svg>
    <span class="abs" style="left:301px;top:5px;line-height:18px">GitHub</span>
    <span class="abs" style="left:406px;top:4px;line-height:18px;font-size:13px;color:#d8d8d8">»</span>
  </div>

  <!-- page -->
  <div class="abs" style="left:0;top:96px;width:428px;height:838px;background:#fff"></div>
  <div class="abs" style="left:0;top:96px;width:38px;height:838px;background:linear-gradient(90deg,#adadad 0,#c6c6c6 8%,#dadada 28%,#ececec 50%,#f9f9f9 75%,#fff 100%)"></div>
  <div class="abs" style="left:0;top:89px;width:428px;height:7px;background:linear-gradient(rgba(52,52,52,0),rgba(52,52,52,.85))"></div>
  <!-- stacked digits -->
  <div class="abs nums" style="left:186.5px;top:465.2px;width:60px;height:44px">
    <span>0</span><span>1</span><span>2</span><span>3</span>
  </div>
  <div class="abs" style="left:166px;top:530.9px;width:100px;height:20px;line-height:20px;text-align:center;font-size:14.5px;font-weight:bold;color:#1c1c1c;-webkit-text-stroke:.3px;letter-spacing:-0.15px;white-space:nowrap">Get Ready</div>
  <!-- mouse pointer -->
  <svg class="abs" style="left:195px;top:500px" width="26" height="32" viewBox="195 500 26 32"><path d="M202 506 L202 522.300 L205.300 519.600 L207.400 524.800 Q208.500 525.300 210.900 523.700 L208.800 518.500 L213.400 517.900 Z" fill="#4a4a4a"/></svg>
  <!-- udemy watermark -->
  <div class="abs" style="left:355px;top:902px;width:72px;height:24px;filter:blur(.4px)">
    <svg class="abs" style="left:0;top:0;filter:drop-shadow(.8px 1px 1.2px rgba(0,0,0,.3))" width="25" height="24" viewBox="0 0 25 24" fill="none" stroke="#ffffff" stroke-width="3.400" stroke-linecap="round" stroke-linejoin="round"><path d="M3 9.500 L9 3.500 C7 11 5 19.500 8 20 C11 20 13.500 10 15 6 C14 11 13.500 17.500 16.500 17.500 C19 17.500 20.500 14.500 21.500 12"/></svg>
    <span class="abs" style="left:28px;top:5px;font-size:11.7px;line-height:16px;color:#fff;font-weight:bold;letter-spacing:-0.1px;text-shadow:.8px 1px 1.500px rgba(0,0,0,.33)">Udemy</span>
  </div>
</div>

</div>

<!-- VLC controls -->
<div id="controls" class="abs">
  <div class="abs tm" style="left:10px;top:2px">03:14</div>
  <div class="abs tm" style="left:1879.5px;top:2px">07:39</div>
  <!-- seek bar -->
  <div class="abs" style="left:59.5px;top:4.5px;width:1802.3px;height:8.5px;border-radius:4.500px;background:linear-gradient(#bfc0c1,#d3d4d5 60%,#d9dadb)"></div>
  <div class="abs" style="left:59.500px;top:4.500px;width:763px;height:8.500px;border-radius:4.500px;background:linear-gradient(#2e86de,#2a7dd0)"></div>
  <!-- buttons -->
  <div class="btn" style="left:4px;top:20px;width:30px;height:32px"></div>
  <svg class="abs" style="left:11px;top:25.500px" width="16" height="19" viewBox="0 0 16 19"><path d="M1.500 1 L15 9.500 L1.500 18 Z" fill="#707070"/></svg>

  <div class="btn" style="left:48px;top:23px;width:24px;height:24px"></div>
  <svg class="abs" style="left:52px;top:29px" width="16" height="12" viewBox="0 0 16 12" fill="#707070"><rect x="0" y="1" width="3.500" height="10"/><path d="M9.500 1 V11 L3.500 6 Z M15.500 1 V11 L9.500 6 Z"/></svg>
  <div class="btn" style="left:74px;top:23px;width:24px;height:24px"></div>
  <div class="abs" style="left:81px;top:30px;width:10px;height:10px;background:#707070"></div>
  <div class="btn" style="left:100px;top:23px;width:24px;height:24px"></div>
  <svg class="abs" style="left:104px;top:29px" width="16" height="12" viewBox="0 0 16 12" fill="#707070"><rect x="12.500" y="1" width="3.500" height="10"/><path d="M0.500 1 V11 L6.500 6 Z M6.500 1 V11 L12.500 6 Z"/></svg>

  <div class="btn" style="left:138px;top:23px;width:24px;height:24px"></div>
  <svg class="abs" style="left:142px;top:27.500px" width="16" height="15" viewBox="0 0 16 15" fill="none" stroke="#707070" stroke-width="2.200"><path d="M1 5 V1.500 H5 M11 1.500 H15 V5 M15 10 V13.500 H11 M5 13.500 H1 V10"/></svg>
  <div class="btn" style="left:164px;top:23px;width:24px;height:24px"></div>
  <svg class="abs" style="left:168px;top:27.500px" width="16" height="15" viewBox="0 0 16 15" fill="none" stroke="#707070" stroke-width="1.800"><path d="M3 0.500 V14.500 M8 0.500 V14.500 M13 0.500 V14.500"/><path d="M0.500 5 H5.500 M5.500 10.500 H10.500 M10.500 6 H15.500" stroke-width="2.400"/></svg>

  <div class="btn" style="left:202px;top:23px;width:24px;height:24px"></div>
  <svg class="abs" style="left:205.500px;top:28.500px" width="16" height="14" viewBox="0 0 16 14" fill="#707070"><rect x="0.500" y="0.500" width="14" height="2.200"/><rect x="0.500" y="5" width="14" height="2.200"/><rect x="0.500" y="9.500" width="9" height="2.200"/><path d="M11 8.500 L15.500 11 L11 13.500 Z"/></svg>
  <div class="btn" style="left:228px;top:23px;width:24px;height:24px"></div>
  <svg class="abs" style="left:231.500px;top:27.500px" width="16" height="15" viewBox="0 0 16 15" fill="none" stroke="#707070" stroke-width="2"><path d="M2 7 V5.500 C2 4 3 3.500 4 3.500 H12"/><path d="M14 8 V9.500 C14 11 13 11.500 12 11.500 H4"/><path d="M11 0.500 L15 3.500 L11 6.500 Z M5 8.500 L1 11.500 L5 14.500 Z" fill="#707070" stroke="none"/></svg>
  <div class="btn" style="left:254px;top:23px;width:24px;height:24px"></div>
  <svg class="abs" style="left:258px;top:27.500px" width="16" height="15" viewBox="0 0 16 15" fill="none" stroke="#707070" stroke-width="2.100"><path d="M1 2.500 H3.500 L11 12 H13 M1 12 H3.500 L6 9 M8.500 5.500 L11 2.500 H13"/><path d="M11.500 0 L15.500 2.500 L11.500 5 Z M11.500 9.500 L15.500 12 L11.500 14.500 Z" fill="#707070" stroke="none"/></svg>

  <!-- volume -->
  <svg class="abs" style="left:1819px;top:36px" width="17" height="14" viewBox="0 0 17 14"><path d="M1 4.500 H3.500 L7 1 V13 L3.500 9.500 H1 Z" fill="#6e6e6e"/><g fill="none" stroke="#ff9a1f" stroke-width="1.200"><path d="M8.800 4.500 C10 6 10 8 8.800 9.500"/><path d="M10.800 3 C12.700 5.500 12.700 8.500 10.800 11"/><path d="M12.800 1.500 C15.400 5 15.400 9 12.800 12.500"/></g></svg>
  <div class="abs" style="left:1846.3px;top:28px;font-size:8.1px;line-height:10px;color:#9aa0ad;white-space:nowrap">115%</div>
  <svg class="abs" style="left:1839px;top:25px" width="77" height="25" viewBox="0 0 77 25">
    <defs><linearGradient id="vg" x1="0" x2="1" y1="0" y2="0"><stop offset="0" stop-color="#86d586"/><stop offset="0.500" stop-color="#3fcf3f"/><stop offset="0.750" stop-color="#1fce1f"/><stop offset="0.855" stop-color="#f5d21a"/><stop offset="0.925" stop-color="#ff8a10"/><stop offset="1" stop-color="#ff8a10"/></linearGradient>
    <clipPath id="vc"><rect x="0" y="0" width="69" height="25"/></clipPath></defs>
    <path d="M2.500 22.500 L73 2.500 Q74.500 2.300 74.500 4 V21 Q74.500 22.700 73 22.700 Z" fill="#f4f5f6"/>
    <path d="M2.500 22.500 L73 2.500 Q74.500 2.300 74.500 4 V21 Q74.500 22.700 73 22.700 Z" fill="url(#vg)" clip-path="url(#vc)"/>
    <path d="M2.500 22.500 L73 2.500 Q74.500 2.300 74.500 4 V21 Q74.500 22.700 73 22.700 Z" fill="none" stroke="#6c6c6c" stroke-width="1.200" stroke-linejoin="round"/>
  </svg>

</div>

</div>
</body>
</html>
